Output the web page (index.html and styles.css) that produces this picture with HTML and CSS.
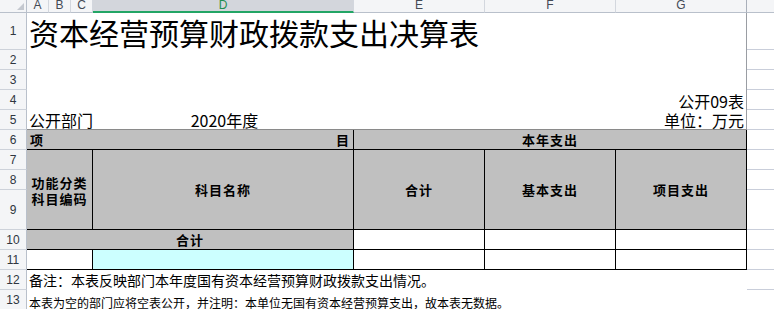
FILE: index.html
```html
<!DOCTYPE html>
<html lang="zh-CN">
<head>
<meta charset="utf-8">
<title>资本经营预算财政拨款支出决算表</title>
<link rel="stylesheet" href="styles.css">
</head>
<body>
<div class="sheet">
  <div class="corner"><svg width="26" height="12" viewBox="0 0 26 12"><polygon points="17,10 24,10 24,3" fill="#c4c8cf"/></svg></div>
  <div class="ch c-a">A</div>
  <div class="ch c-b">B</div>
  <div class="ch c-c">C</div>
  <div class="ch c-d sel">D</div>
  <div class="ch c-e">E</div>
  <div class="ch c-f">F</div>
  <div class="ch c-g">G</div>
  <div class="ch c-x"></div>

  <div class="rh r1">1</div>
  <div class="rh r2">2</div>
  <div class="rh r3">3</div>
  <div class="rh r4">4</div>
  <div class="rh r5">5</div>
  <div class="rh r6">6</div>
  <div class="rh r7">7</div>
  <div class="rh r8">8</div>
  <div class="rh r9">9</div>
  <div class="rh r10">10</div>
  <div class="rh r11">11</div>
  <div class="rh r12">12</div>
  <div class="rh r13">13</div>

  <div class="ext r1"></div>
  <div class="ext r2"></div>
  <div class="ext r3"></div>
  <div class="ext r4"></div>
  <div class="ext r5"></div>
  <div class="ext r6"></div>
  <div class="ext r7"></div>
  <div class="ext r8"></div>
  <div class="ext r9"></div>
  <div class="ext r10"></div>
  <div class="ext r11"></div>
  <div class="ext r12"></div>
  <div class="ext r13"></div>

  <div class="top title r1">资本经营预算财政拨款支出决算表</div>
  <div class="top r2"></div>
  <div class="top r3"></div>
  <div class="top code r4">公开09表</div>
  <div class="top info r5">
    <span class="dept">公开部门</span>
    <span class="year">2020年度</span>
    <span class="unit">单位：万元</span>
  </div>

  <div class="th split r6 c-ad"><span>项</span><span>目</span></div>
  <div class="th r6 c-eg">本年支出</div>

  <div class="th twoline r79 c-ac"><span class="ln">功能分类</span><span class="ln">科目编码</span></div>
  <div class="th r79 c-d">科目名称</div>
  <div class="th r79 c-e">合计</div>
  <div class="th r79 c-f">基本支出</div>
  <div class="th r79 c-g">项目支出</div>

  <div class="th r10 c-ad">合计</div>
  <div class="td r10 c-e"></div>
  <div class="td r10 c-f"></div>
  <div class="td r10 c-g"></div>

  <div class="td r11 c-ac"></div>
  <div class="td cyan r11 c-d"></div>
  <div class="td r11 c-e"></div>
  <div class="td r11 c-f"></div>
  <div class="td r11 c-g"></div>

  <div class="note note1 r12">备注：本表反映部门本年度国有资本经营预算财政拨款支出情况。</div>
  <div class="note note2 r13">本表为空的部门应将空表公开，并注明：本单位无国有资本经营预算支出，故本表无数据。</div>
</div>
</body>
</html>
```

FILE: styles.css
```css
* {
  box-sizing: border-box;
  margin: 0;
  padding: 0;
}

html, body {
  background: #ffffff;
}

body {
  width: 774px;
  height: 309px;
  overflow: hidden;
  font-family: "Noto Sans CJK SC", "Liberation Sans", sans-serif;
  color: #000000;
}

.sheet {
  display: grid;
  grid-template-columns: 27px 22px 22px 22px 261px 131px 131px 131px 27px;
  grid-template-rows: 13px 37px repeat(7, 20px) 40px repeat(4, 20px);
}

/* column header */
.corner {
  grid-row: 1;
  grid-column: 1;
  background: #f4f5f7;
  border-right: 1px solid #b9c0cb;
  border-bottom: 1px solid #b9c0cb;
}
.corner svg {
  display: block;
}

.ch {
  grid-row: 1;
  background: #f4f5f7;
  border-right: 1px solid #d3d7de;
  border-bottom: 1px solid #b9c0cb;
  font-family: "Liberation Sans", sans-serif;
  font-size: 12px;
  line-height: 10px;
  color: #444a55;
  text-align: center;
  overflow: hidden;
}
.ch.sel {
  background: #d3d6dc;
  color: #1f8f52;
  border-bottom: 2px solid #22a565;
}
.ch.c-g {
  border-right-color: #a9afba;
}
.ch.c-x {
  grid-column: 9;
  border-right: none;
}

/* column placement */
.c-a { grid-column: 2; }
.c-b { grid-column: 3; }
.c-c { grid-column: 4; }
.c-d { grid-column: 5; }
.c-e { grid-column: 6; }
.c-f { grid-column: 7; }
.c-g { grid-column: 8; }
.c-ad { grid-column: 2 / 6; }
.c-ac { grid-column: 2 / 5; }
.c-eg { grid-column: 6 / 9; }

/* row placement */
.r1 { grid-row: 2; }
.r2 { grid-row: 3; }
.r3 { grid-row: 4; }
.r4 { grid-row: 5; }
.r5 { grid-row: 6; }
.r6 { grid-row: 7; }
.r7 { grid-row: 8; }
.r8 { grid-row: 9; }
.r9 { grid-row: 10; }
.r79 { grid-row: 8 / 11; }
.r10 { grid-row: 11; }
.r11 { grid-row: 12; }
.r12 { grid-row: 13; }
.r13 { grid-row: 14; }

/* row header */
.rh {
  grid-column: 1;
  background: #f4f5f7;
  border-right: 1px solid #b9c0cb;
  border-bottom: 1px solid #cdd2da;
  font-family: "Liberation Sans", sans-serif;
  font-size: 12px;
  color: #2f3640;
  display: flex;
  align-items: center;
  justify-content: center;
}

/* outside print area */
.ext {
  grid-column: 9;
  border-bottom: 1px solid #c9ceda;
}

/* top rows */
.top {
  grid-column: 2 / 9;
  border-right: 1px solid #9a9da3;
}
.title {
  font-size: 30px;
  line-height: 30px;
  padding-left: 2px;
  display: flex;
  align-items: center;
  white-space: nowrap;
}
.code {
  font-size: 16px;
  line-height: 16px;
  display: flex;
  align-items: flex-end;
  justify-content: flex-end;
  padding-right: 2px;
  padding-bottom: 1px;
}
.info {
  display: grid;
  grid-template-columns: 66px 261px 1fr;
  align-items: end;
  font-size: 16px;
  line-height: 16px;
  padding-bottom: 1px;
  border-bottom: 1px solid #8a8a8a;
  white-space: nowrap;
}
.dept {
  padding-left: 2px;
}
.year {
  text-align: center;
  padding-left: 2px;
}
.unit {
  text-align: right;
  padding-right: 2px;
}

/* table */
.th {
  background: #c0c0c0;
  border-right: 1px solid #000000;
  border-bottom: 1px solid #000000;
  font-size: 13px;
  font-weight: 700;
  letter-spacing: 1px;
  line-height: 16px;
  display: flex;
  align-items: center;
  justify-content: center;
  text-align: center;
  white-space: nowrap;
}
.th.split {
  justify-content: space-between;
  padding: 0 3px 0 3px;
}
.th.twoline {
  flex-direction: column;
  padding-top: 2px;
}
.ln {
  display: block;
  height: 16px;
}
.td {
  background: #ffffff;
  border-right: 1px solid #000000;
  border-bottom: 1px solid #000000;
}
.td.cyan {
  background: #ccffff;
}

/* notes */
.note {
  grid-column: 2 / 9;
  white-space: nowrap;
  display: flex;
  padding-left: 2px;
}
.note1 {
  font-size: 14px;
  line-height: 14px;
  align-items: center;
}
.note2 {
  font-size: 12px;
  line-height: 12px;
  align-items: flex-end;
  padding-bottom: 1px;
}
```
